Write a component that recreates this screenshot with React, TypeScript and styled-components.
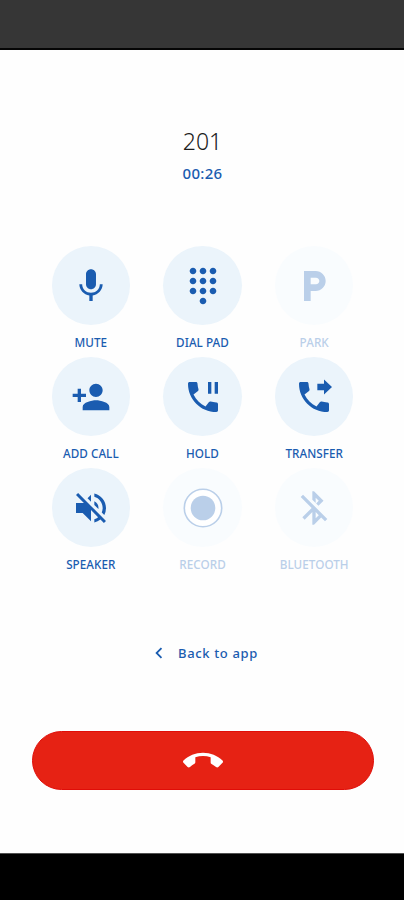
import React from 'react';
import styled, { createGlobalStyle } from 'styled-components';
import type { IconType } from 'react-icons';
import {
  MdBluetoothDisabled, MdCallEnd, MdChevronLeft, MdDialpad, MdLocalParking,
  MdMic, MdPersonAdd, MdVolumeOff,
} from 'react-icons/md';

const GlobalStyle = createGlobalStyle`
  *, *::before, *::after { box-sizing: border-box; }
  body { margin: 0; background: #fff; }
  button { font: inherit; border: 0; padding: 0; background: none; cursor: pointer; }
  svg { display: block; }
`;

const Screen = styled.main`
  width: 404px;
  height: 900px;
  display: flex;
  flex-direction: column;
  overflow: hidden;
  background: #fefefe;
  color: #1a5cb0;
  font-family: 'Noto Sans', 'Open Sans', sans-serif;
`;

const StatusBar = styled.header`
  height: 50px;
  flex: none;
  background: #363636;
  border-bottom: 2px solid #050505;
`;

const NavigationBar = styled.footer`
  height: 47px;
  flex: none;
  background: #000;
  border-top: 1px solid #505050;
`;

const CallView = styled.div`
  flex: 1;
  display: flex;
  flex-direction: column;
  align-items: center;
  padding-left: 1px;
`;

const Caller = styled.h1`
  margin: 75px 0 0;
  color: #1c1c1c;
  font-size: 23px;
  font-weight: 350;
  line-height: 32px;
`;

const Duration = styled.time`
  margin-top: 5px;
  font-size: 15px;
  font-weight: 500;
  line-height: 22px;
  letter-spacing: 0.3px;
`;

const Actions = styled.section`
  display: grid;
  grid-template-columns: repeat(3, 111.7px);
  grid-auto-rows: 111px;
  margin-top: 62px;
`;

const Action = styled.button`
  display: flex;
  flex-direction: column;
  align-items: center;
  color: #1a5cb0;
  &:disabled { color: #bacfe9; cursor: default; }
`;

const Disc = styled.span<{ $muted?: boolean }>`
  display: flex;
  align-items: center;
  justify-content: center;
  width: 78.5px;
  height: 79px;
  padding-top: 1px;
  border-radius: 50%;
  background: ${({ $muted }) => ($muted ? '#f9fcfe' : '#ebf4fb')};
`;

const Label = styled.span`
  margin-top: 9px;
  font-size: 11.7px;
  font-weight: 500;
  line-height: 16px;
  letter-spacing: 0.05px;
  white-space: nowrap;
`;

const BackLink = styled.button`
  display: flex;
  align-items: center;
  gap: 8px;
  margin-top: 62px;
  padding-left: 1px;
  height: 24px;
  color: #1a5cb0;
  font-size: 13px;
  font-weight: 500;
  letter-spacing: 0.65px;
`;

const HangUp = styled.button`
  display: flex;
  align-items: center;
  justify-content: center;
  width: 342px;
  height: 59px;
  margin-top: 66px;
  border: 1px solid #e00d08;
  border-radius: 30px;
  background: #e62214;
  color: #fff;
`;

const HANDSET =
  'M4 3H7.7C8.3 3 8.7 3.4 8.7 4C8.8 5.3 9 6.4 9.3 7.4C9.4 7.8 9.3 8.1 9 8.4L6.3 10.5C7.9 13.7 10.3 16.1 13.5 17.7L15.6 15C15.9 14.7 16.2 14.6 16.6 14.7C17.6 15 18.7 15.2 20 15.3C20.6 15.3 21 15.7 21 16.3V20C21 20.6 20.6 21 20 21C10.6 21 3 13.4 3 4C3 3.4 3.4 3 4 3Z';

const HoldIcon = () => (
  <svg width="40" height="40" viewBox="0 0 24 24" fill="currentColor">
    <path d={HANDSET} />
    <path d="M15 3H17V10H15ZM19 3H21V10H19Z" />
  </svg>
);

const TransferIcon = () => (
  <svg width="40" height="40" viewBox="0 0 24 24" fill="currentColor">
    <path d={HANDSET} />
    <path d="M18 1.5L22.8 6L18 10.5V8H14V4H18Z" />
  </svg>
);

const RecordIcon = () => (
  <svg width="40" height="40" viewBox="0 0 40 40">
    <circle cx="20" cy="20" r="18.7" fill="#fff" stroke="currentColor" strokeWidth="1.6" />
    <circle cx="20" cy="20" r="12.3" fill="currentColor" />
  </svg>
);

interface CallAction {
  label: string;
  icon: IconType;
  disabled?: boolean;
}

const actions: CallAction[] = [
  { label: 'MUTE', icon: MdMic },
  { label: 'DIAL PAD', icon: MdDialpad },
  { label: 'PARK', icon: MdLocalParking, disabled: true },
  { label: 'ADD CALL', icon: MdPersonAdd },
  { label: 'HOLD', icon: HoldIcon },
  { label: 'TRANSFER', icon: TransferIcon },
  { label: 'SPEAKER', icon: MdVolumeOff },
  { label: 'RECORD', icon: RecordIcon, disabled: true },
  { label: 'BLUETOOTH', icon: MdBluetoothDisabled, disabled: true },
];

export default function App() {
  return (
    <>
      <GlobalStyle />
      <Screen>
        <StatusBar />
        <CallView>
          <Caller>201</Caller>
          <Duration>00:26</Duration>
          <Actions>
            {actions.map(({ label, icon: Icon, disabled }) => (
              <Action key={label} disabled={disabled}>
                <Disc $muted={disabled}><Icon size={40} /></Disc>
                <Label>{label}</Label>
              </Action>
            ))}
          </Actions>
          <BackLink><MdChevronLeft size={22} />Back to app</BackLink>
          <HangUp aria-label="End call"><MdCallEnd size={40} /></HangUp>
        </CallView>
        <NavigationBar />
      </Screen>
    </>
  );
}
